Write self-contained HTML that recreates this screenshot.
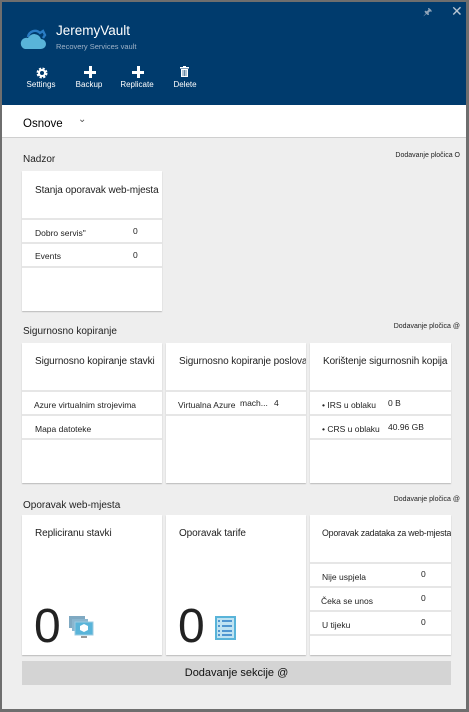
<!DOCTYPE html>
<html><head><meta charset="utf-8"><style>
*{margin:0;padding:0;box-sizing:border-box}
body{width:469px;height:712px;background:#6e6e6e;font-family:"Liberation Sans",sans-serif;position:relative;overflow:hidden;color:#222}
.frame{position:absolute;left:2px;top:2px;width:464px;height:707px;background:#eeeeee}
.hdr{position:absolute;left:0;top:0;width:464px;height:103px;background:#003b6d;color:#fff}
.a{position:absolute;white-space:nowrap}
.bar{position:absolute;left:0;top:103px;width:464px;height:33px;background:#fff;border-bottom:1px solid #cfcfcf}
.tile{position:absolute;background:#fff;box-shadow:0 1px 1px #bbb;overflow:hidden}
.tt{position:absolute;left:13px;top:13px;font-size:10px;letter-spacing:-0.1px;white-space:nowrap}
.ln{position:absolute;left:0;right:0;height:2px;background:#e6e6e6}
.r{position:absolute;font-size:8.5px;white-space:nowrap}
.sec{position:absolute;font-size:10px}
.add{position:absolute;font-size:7px;right:6px}
.tb{position:absolute;top:78px;font-size:8px;text-align:center;width:40px}
.big{position:absolute;left:12px;top:84px;font-size:48px;color:#222}
</style></head><body>
<div class="frame">
<div class="hdr">
 <svg class="a" style="left:17px;top:26px" width="28" height="22" viewBox="0 0 28 22"><path d="M6 21h16a5 5 0 0 0 0-10 7 7 0 0 0-13-1 5.5 5.5 0 0 0-3 11z" fill="#59b4d9"/><path d="M9 9a7 7 0 0 1 12-4l3-2 2 4-2 3" fill="none" stroke="#2a7cc4" stroke-width="2.4"/></svg>
 <div class="a" style="left:54px;top:21px;font-size:13.5px">JeremyVault</div>
 <div class="a" style="left:54px;top:40px;font-size:7.5px;color:#9fb3c8">Recovery Services vault</div>
 <div class="a" style="left:421px;top:3px;font-size:10px;color:#8ea3b8">&#x1F588;</div>
 <div class="a" style="left:449px;top:1px;font-size:14px;color:#b7c5d3">✕</div>
 <svg class="a" style="left:34px;top:65px" width="12" height="12" viewBox="0 0 12 12"><circle cx="6" cy="6" r="4" fill="none" stroke="#fff" stroke-width="3" stroke-dasharray="2 1.2"/><circle cx="6" cy="6" r="3" fill="none" stroke="#fff" stroke-width="2"/></svg>
 <div class="a" style="left:82px;top:64px;width:12px;height:12px"><div class="a" style="left:5px;top:0;width:3px;height:12px;background:#fff"></div><div class="a" style="left:0;top:5px;width:12px;height:3px;background:#fff"></div></div>
 <div class="a" style="left:130px;top:64px;width:12px;height:12px"><div class="a" style="left:5px;top:0;width:3px;height:12px;background:#fff"></div><div class="a" style="left:0;top:5px;width:12px;height:3px;background:#fff"></div></div>
 <svg class="a" style="left:178px;top:64px" width="9" height="11" viewBox="0 0 9 11"><rect x="0" y="1" width="9" height="1.5" fill="#fff"/><rect x="3" y="0" width="3" height="1" fill="#fff"/><path d="M1 3h7v8H1z" fill="#fff"/><path d="M3 4v6M4.5 4v6M6 4v6" stroke="#003b6d" stroke-width=".6"/></svg>
 <div class="tb" style="left:19px">Settings</div>
 <div class="tb" style="left:67px">Backup</div>
 <div class="tb" style="left:115px">Replicate</div>
 <div class="tb" style="left:163px">Delete</div>
</div>
<div class="bar"><div class="a" style="left:21px;top:13px;font-size:11.5px;color:#000">Osnove</div><div class="a" style="left:76px;top:9px;font-size:10px;color:#555">&#8964;</div></div>

<div class="sec" style="left:21px;top:152px">Nadzor</div>
<div class="add" style="top:150px">Dodavanje pločica O</div>
<div class="tile" style="left:20px;top:169px;width:140px;height:140px">
 <div class="tt" style="top:14px">Stanja oporavak web-mjesta</div>
 <div class="ln" style="top:47px"></div><div class="ln" style="top:71px"></div><div class="ln" style="top:95px"></div>
 <div class="r" style="left:13px;top:57px">Dobro servis"</div><div class="r" style="left:111px;top:55px">0</div>
 <div class="r" style="left:13px;top:80px">Events</div><div class="r" style="left:111px;top:79px">0</div>
</div>

<div class="sec" style="left:21px;top:324px">Sigurnosno kopiranje</div>
<div class="add" style="top:321px">Dodavanje pločica @</div>
<div class="tile" style="left:20px;top:341px;width:140px;height:140px">
 <div class="tt">Sigurnosno kopiranje stavki</div>
 <div class="ln" style="top:47px"></div><div class="ln" style="top:71px"></div><div class="ln" style="top:95px"></div>
 <div class="r" style="left:12px;top:57px">Azure virtualnim strojevima</div>
 <div class="r" style="left:13px;top:81px">Mapa datoteke</div>
</div>
<div class="tile" style="left:164px;top:341px;width:140px;height:140px">
 <div class="tt">Sigurnosno kopiranje poslova</div>
 <div class="ln" style="top:47px"></div><div class="ln" style="top:71px"></div>
 <div class="r" style="left:12px;top:57px">Virtualna Azure</div><div class="r" style="left:74px;top:55px">mach...</div><div class="r" style="left:108px;top:55px">4</div>
</div>
<div class="tile" style="left:308px;top:341px;width:141px;height:140px">
 <div class="tt">Korištenje sigurnosnih kopija</div>
 <div class="ln" style="top:47px"></div><div class="ln" style="top:71px"></div><div class="ln" style="top:95px"></div>
 <div class="r" style="left:12px;top:57px">• IRS u oblaku</div><div class="r" style="left:78px;top:55px">0 B</div>
 <div class="r" style="left:12px;top:81px">• CRS u oblaku</div><div class="r" style="left:78px;top:79px">40.96 GB</div>
</div>

<div class="sec" style="left:21px;top:498px">Oporavak web-mjesta</div>
<div class="add" style="top:494px">Dodavanje pločica @</div>
<div class="tile" style="left:20px;top:513px;width:140px;height:140px">
 <div class="tt">Repliciranu stavki</div>
 <div class="big">0</div>
 <svg class="a" style="left:47px;top:101px" width="25" height="25" viewBox="0 0 25 25"><rect x="0" y="0" width="16" height="12" fill="#7fa9c2"/><rect x="3" y="3" width="16" height="12" fill="#8ab6cf"/><rect x="6" y="6" width="18" height="13" fill="#59b4d9" stroke="#9ccbe1"/><path d="M15 8l4 2v4l-4 2-4-2v-4z" fill="#fff"/><rect x="12" y="20" width="6" height="2" fill="#999"/></svg>
</div>
<div class="tile" style="left:164px;top:513px;width:140px;height:140px">
 <div class="tt">Oporavak tarife</div>
 <div class="big">0</div>
 <svg class="a" style="left:49px;top:101px" width="21" height="24" viewBox="0 0 21 24"><rect x="0" y="0" width="21" height="24" fill="#59b4d9"/><rect x="2" y="2" width="17" height="20" fill="#bfe3f2"/><path d="M3 5h2M3 10h2M3 15h2M3 19h2M7 5h10M7 10h10M7 15h10M7 19h10" stroke="#2a7cc4" stroke-width="1.6"/></svg>
</div>
<div class="tile" style="left:308px;top:513px;width:141px;height:140px">
 <div class="tt" style="left:12px;top:13px;font-size:8.8px;letter-spacing:-0.2px">Oporavak zadataka za web-mjesta</div>
 <div class="ln" style="top:47px"></div><div class="ln" style="top:71px"></div><div class="ln" style="top:95px"></div><div class="ln" style="top:119px"></div>
 <div class="r" style="left:12px;top:57px">Nije uspjela</div><div class="r" style="left:111px;top:54px">0</div>
 <div class="r" style="left:11px;top:81px">Čeka se unos</div><div class="r" style="left:111px;top:78px">0</div>
 <div class="r" style="left:12px;top:105px">U tijeku</div><div class="r" style="left:111px;top:102px">0</div>
</div>
<div class="a" style="left:20px;top:659px;width:429px;height:24px;background:#d4d4d4;font-size:11px;text-align:center;line-height:24px;color:#111">Dodavanje sekcije @</div>
</div>
</body></html>
